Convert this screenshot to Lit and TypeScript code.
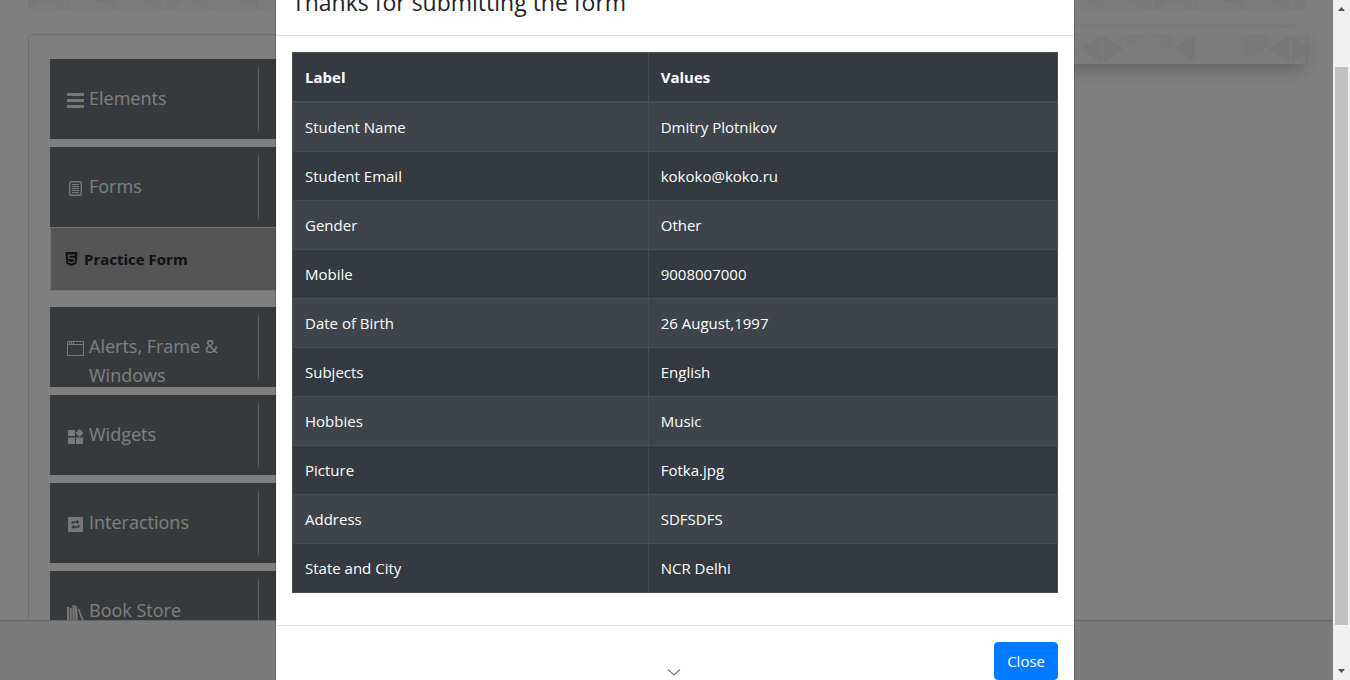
import { LitElement, html, css, svg } from "lit";
import { customElement, state } from "lit/decorators.js";

const icons = {
  elements: svg`<path fill="currentColor" d="M0 1h17v3H0zM0 7h17v3H0zM0 13h17v3H0z"/>`,
  forms: svg`<rect x="2.7" y="1.7" width="11.6" height="13.6" rx="1.5" fill="none" stroke="currentColor" stroke-width="1.4"/><path stroke="currentColor" d="M5 4.5h7M5 6.5h7M5 8.5h7M5 10.5h7M5 12.5h7"/>`,
  alerts: svg`<path fill="none" stroke="currentColor" d="M.5 1.5h16v14H.5zM.5 4.5h16M2.5 1.500v3M4.500 1.500v3M6.500 1.500v3"/>`,
  widgets: svg`<path fill="currentColor" d="M1 2h7v6H1zM1 9.500h7V16H1zM9 9.500h7V16H9zM12.500 1l4 4-4 4-4-4z"/>`,
  interactions: svg`<path fill="currentColor" fill-rule="evenodd" d="M2 1h13a1 1 0 0 1 1 1v13a1 1 0 0 1-1 1H2a1 1 0 0 1-1-1V2a1 1 0 0 1 1-1zM4.500 8H6V6.700h3.800V8.200L12.500 6 9.800 3.800v1.500H5.500a1 1 0 0 0-1 1zM12.500 9H11v1.300H7.200V8.800L4.500 11l2.700 2.200v-1.500h4.300a1 1 0 0 0 1-1z"/>`,
  books: svg`<path fill="currentColor" d="M0 3h2v14H0zM2.700 4h2v13h-2zM5.500 1h2.200v16H5.500zM8 2l1.600-.3L11 17H8.500zM10.500 5l1.400-.5L17 16.500l-1.800.5z"/>`,
};

@customElement("side-group")
class SideGroup extends LitElement {
  static properties = { label: {}, icon: {} };
  declare label: string;
  declare icon: keyof typeof icons;
  static styles = css`
    :host { display: block; margin-bottom: 8px; }
    .head {
      display: flex; box-sizing: border-box; width: 100%; height: 80px; padding: 8px 0; border: 0;
      background: #6d757b; color: #fff; font: inherit; font-size: 18px; line-height: 29px; text-align: left;
    }
    .name { flex: 1; display: flex; gap: 5px; padding: 17px 24px 0 17px; border-right: 1px solid #c0b8b0; }
    .icon { flex: none; width: 17px; height: 17px; margin-top: 8px; color: #f0f0f0; }
    .arrow { width: 51px; }
  `;
  render() {
    return html`<button class="head" type="button">
        <span class="name"><svg class="icon" viewBox="0 0 17 17">${icons[this.icon]}</svg>${this.label}</span>
        <span class="arrow"></span>
      </button><slot></slot>`;
  }
}

@customElement("result-dialog")
class ResultDialog extends LitElement {
  static styles = css`
    :host { display: block; box-sizing: border-box; width: 800px; max-width: 100%; background: #fff;
      background-clip: padding-box; border: 1px solid rgba(0, 0, 0, 0.2); border-radius: 5px; color: #212529; }
    .header { padding: 17px 16px 15px; border-bottom: 1px solid #dee2e6; }
    .title { margin: 0; font-size: 23px; font-weight: 500; line-height: 36px; }
    .body { padding: 16px 16px 32px; }
    .table { width: 100%; border-collapse: collapse; background: #343a40; color: #fff; table-layout: fixed; }
    th, td { box-sizing: border-box; padding: 12px; line-height: 24px; border: 1px solid #454d55; text-align: left; }
    th { border-bottom-width: 2px; font-weight: 700; font-size: 15px; }
    td { font-size: 15px; }
    .label-col { width: 46.5%; }
    tbody tr:nth-child(odd) { background: rgba(255, 255, 255, 0.05); }
    .footer { display: flex; justify-content: flex-end; padding: 16px; border-top: 1px solid #dee2e6; }
    .close { height: 38px; padding: 0 12px; border: 1px solid #007bff; border-radius: 4px; background: #007bff;
      color: #fff; font: inherit; font-size: 15px; line-height: 24px; }
  `;
  rows = [
    ["Student Name", "Dmitry Plotnikov"], ["Student Email", "kokoko@koko.ru"], ["Gender", "Other"],
    ["Mobile", "9008007000"], ["Date of Birth", "26 August,1997"], ["Subjects", "English"],
    ["Hobbies", "Music"], ["Picture", "Fotka.jpg"], ["Address", "SDFSDFS"], ["State and City", "NCR Delhi"],
  ];
  render() {
    return html`
      <div class="header"><h4 class="title">Thanks for submitting the form</h4></div>
      <div class="body">
        <table class="table">
          <thead><tr><th class="label-col">Label</th><th>Values</th></tr></thead>
          <tbody>${this.rows.map(([k, v]) => html`<tr><td>${k}</td><td>${v}</td></tr>`)}</tbody>
        </table>
      </div>
      <div class="footer">
        <button class="close" type="button" @click=${() => this.dispatchEvent(new Event("dismiss"))}>Close</button>
      </div>`;
  }
}

@customElement("app-root")
class AppRoot extends LitElement {
  @state() open = true;
  static styles = css`
    :host { display: flex; position: relative; height: 100vh; overflow: hidden; background: #fff;
      font-family: "Segoe UI", "Open Sans", "Noto Sans", sans-serif; font-size: 15px; }
    .page { flex: 1; min-width: 0; display: flex; flex-direction: column; position: relative; }
    .main { flex: 1; min-height: 0; overflow: hidden; padding: 0 28px; }
    .banner { display: block; width: 100%; height: 10px; }
    .columns { display: flex; justify-content: space-between; align-items: flex-start; padding-top: 24px; }
    .side { box-sizing: border-box; width: 304px; height: 720px; padding: 24px 21px; border: 1px solid #dfdfdf; border-radius: 5px; }
    .sub { box-sizing: border-box; display: flex; align-items: center; gap: 6px; height: 64px; margin-bottom: 16px;
      padding: 0 14px; border: 1px solid #e4e4e4; background: #aaa; color: #212529; font-weight: 700; text-decoration: none; }
    .html5 { width: 13px; height: 14px; }
    .ad { width: 320px; height: 36px; margin-top: -6px; box-shadow: 0 8px 16px rgba(0, 0, 0, 0.15), 0 4px 24px rgba(0, 0, 0, 0.06); background: #fdfdfd; }
    .ad svg { display: block; width: 100%; height: 100%; }
    .foot { box-sizing: border-box; height: 60px; border-top: 1px solid #cfcfcf; background: #f6f6f6; }
    .backdrop { position: absolute; inset: 0; background: rgba(0, 0, 0, 0.5); }
    .layer { position: absolute; inset: 0; display: flex; justify-content: center; align-items: flex-start; overflow: hidden; }
    .layer result-dialog { margin-top: -34px; }
    .more { position: absolute; left: 0; right: 0; bottom: 4px; margin: 0 auto; width: 16px; height: 8px; }
    .bar { position: relative; display: flex; flex-direction: column; align-items: center; width: 17px; background: #f0f0f0; }
    .bar svg { flex: none; width: 17px; height: 17px; }
    .before { flex: 50; }
    .thumb { flex: 558; width: 13px; background: #c1c1c1; }
    .after { flex: 38; }
  `;
  render() {
    return html`
      <div class="page">
        <div class="main">
          <svg class="banner" aria-hidden="true">
            <defs><pattern id="tri" width="141" height="10" patternUnits="userSpaceOnUse">
              <path fill="#f9f9f9" d="M0 0h141v10H0z"/>
              <path fill="#f1f1f1" d="M65 0h25v10zM138 10V0h3v10zM0 10V0h20z"/>
              <path fill="#f5f5f5" d="M20 0h23v10H35zM110 0h25v10z"/>
              <path stroke="#fff" stroke-opacity=".5" fill="none" d="M0 10L20 0M20 10L36 0M43 0v10M48 10L64 0l26 10M90 0v10M110 10l16-10"/>
            </pattern></defs>
            <rect width="100%" height="10" fill="url(#tri)"/>
          </svg>
          <div class="columns">
            <nav class="side">
              <side-group label="Elements" icon="elements"></side-group>
              <side-group label="Forms" icon="forms">
                <a class="sub" href="#practice">
                  <svg class="html5" viewBox="0 0 13 14"><path fill="#212529" d="M.5 0h12l-1 12-5 2-5-2z"/><path fill="none" stroke="#aaa" stroke-width="1.300" d="M10 3.200H3.500l.2 3.100h5.600l-.3 3.700-2.500.8-2.500-.8-.1-1.300"/></svg>
                  Practice Form
                </a>
              </side-group>
              <side-group label="Alerts, Frame & Windows" icon="alerts"></side-group>
              <side-group label="Widgets" icon="widgets"></side-group>
              <side-group label="Interactions" icon="interactions"></side-group>
              <side-group label="Book Store" icon="books"></side-group>
            </nav>
            <div class="ad">
              <svg viewBox="0 0 320 36" preserveAspectRatio="xMaxYMid slice" aria-hidden="true">
                <path fill="#f9f9f9" d="M0 6h320v30H0z"/>
                <path fill="#f5f5f5" d="M141 6h46v15l-23-14-23 14zM258 6h24v15zM258 7l23 14-23 14z"/>
                <path fill="#efefef" d="M95 21l22-14v28zM118 7l22 14-22 14zM188 21l22-14v28zM283 21l22-14v28zM306 7l14 9v10l-14 9z"/>
                <path stroke="#fff" stroke-opacity=".5" fill="none" d="M94 21l23-15 24 15 23-15 23 15 23-15 24 15 24-15 24 15 23-15 15 9M94 21l23 15 24-15 23 15 23-15 23 15 24-15 24 15 24-15 23 15 15-9M117.500 6v30M164.500 6v30M306 6v30"/>
              </svg>
            </div>
          </div>
        </div>
        <footer class="foot"></footer>
        ${this.open ? html`<div class="backdrop"></div>` : ""}
      </div>
      ${this.open ? html`<div class="layer"><result-dialog role="dialog" @dismiss=${() => (this.open = false)}></result-dialog></div>` : ""}
      <svg class="more" viewBox="0 0 16 8" aria-hidden="true"><path d="M1 1.500l6 5.500L13 1.500" fill="none" stroke="#777" stroke-width="1.200"/></svg>
      <div class="bar" aria-hidden="true">
        <svg viewBox="0 0 17 17"><path fill="#505050" d="M5 11h7L8.500 7z"/></svg>
        <div class="before"></div><div class="thumb"></div><div class="after"></div>
        <svg viewBox="0 0 17 17"><path fill="#505050" d="M5 6h7l-3.500 4z"/></svg>
      </div>`;
  }
}
